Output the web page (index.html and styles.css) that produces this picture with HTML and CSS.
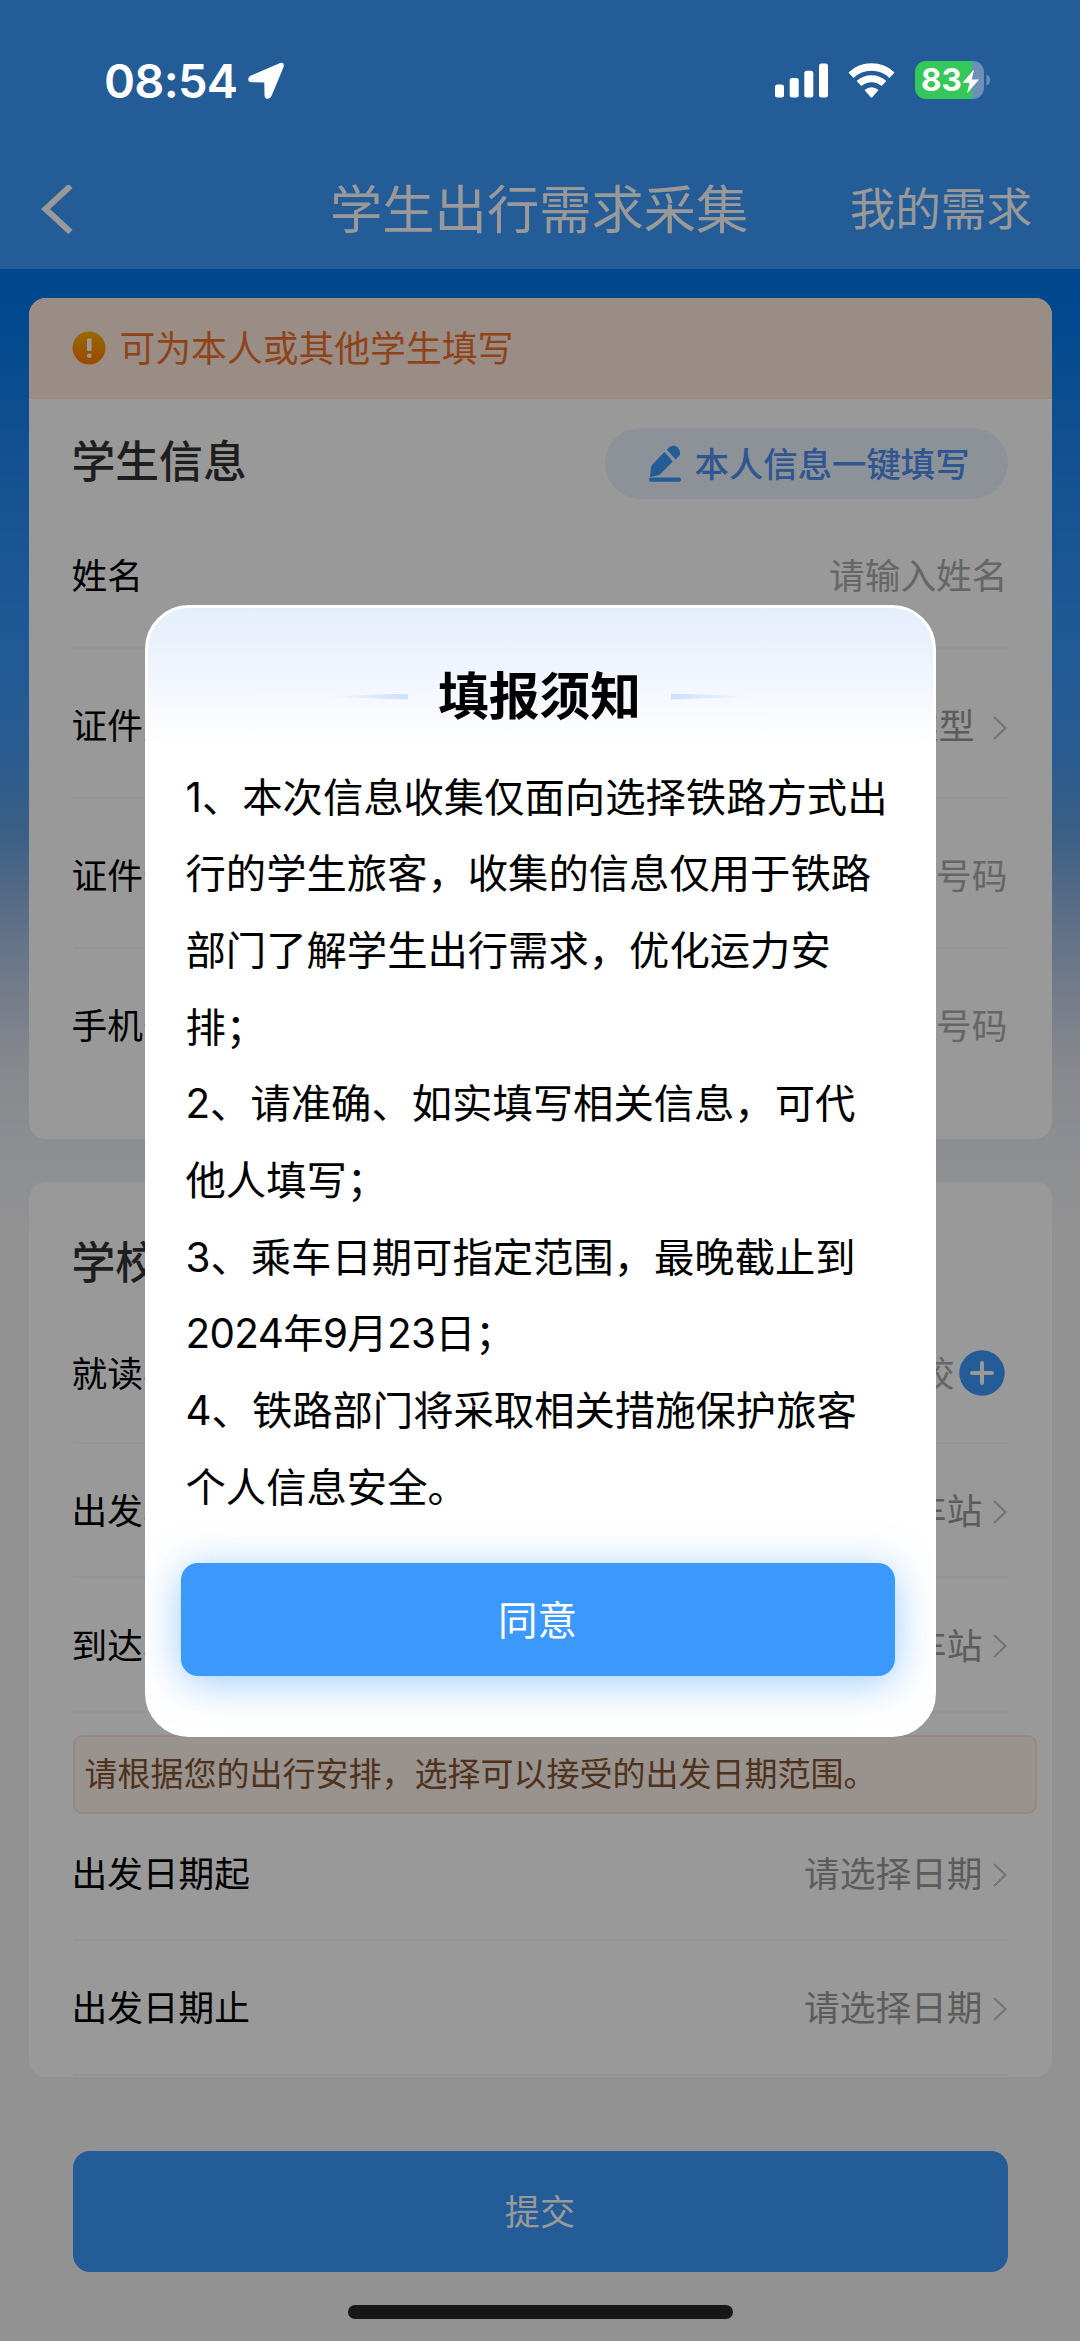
FILE: index.html
```html
<!DOCTYPE html>
<html lang="zh-CN">
<head>
<meta charset="utf-8">
<title>学生出行需求采集</title>
<link rel="stylesheet" href="styles.css">
</head>
<body>
<div class="page">
  <header class="header">
    <nav class="nav">
      <svg class="back" width="34" height="50" viewBox="0 0 34 50"><path d="M29.500 1 L4.500 24 L29.500 47" fill="none" stroke="#fff" stroke-width="6"/></svg>
      <h1 class="nav-title">学生出行需求采集</h1>
      <span class="nav-link">我的需求</span>
    </nav>
  </header>

  <main class="content">
    <section class="card card-student">
      <div class="banner">
        <svg width="34" height="34" viewBox="0 0 34 34">
          <defs><linearGradient id="warn" x1="0" y1="0" x2="0" y2="1"><stop offset="0" stop-color="#ffae00"/><stop offset="1" stop-color="#ff7a00"/></linearGradient></defs>
          <circle cx="17" cy="17" r="16.500" fill="url(#warn)"/>
          <rect x="15" y="7.500" width="4.600" height="12.500" rx="1" fill="#fff"/><rect x="15" y="22.500" width="4.600" height="4.600" rx="2" fill="#fff"/>
        </svg>
        <span>可为本人或其他学生填写</span>
      </div>
      <div class="section-head">
        <h2>学生信息</h2>
        <span class="fill-btn">
          <svg width="32" height="37" viewBox="0 0 32 37" fill="#3b99fc">
            <path d="M1 32 L2 22.500 Q2.300 20.800 3.500 19.500 L15.500 7 L23.800 16.500 L12 28.500 Q10.500 30 8.500 30.500 Z"/>
            <path d="M17.800 4.800 L20.500 2 Q24.500 -1.200 28.500 2.200 Q32.500 6.500 30.500 10.500 L26.700 14.600 Z"/>
            <rect x="0" y="32.600" width="32" height="4.200" rx="2"/>
          </svg>
          <span class="fill-label">本人信息一键填写</span>
        </span>
      </div>
      <div class="row"><span>姓名</span><span class="value input">请输入姓名</span></div>
      <div class="row"><span>证件类型</span><span class="value">请选择证件类型</span><svg class="arrow" viewBox="0 0 14 24"><path d="M1 1 L12.500 12 L1 23"/></svg></div>
      <div class="row"><span>证件号码</span><span class="value input">请输入证件号码</span></div>
      <div class="row"><span>手机号码</span><span class="value input">请输入手机号码</span></div>
    </section>

    <section class="card card-school">
      <div class="section-head"><h2>学校信息</h2></div>
      <div class="row row-school"><span>就读学校</span><span class="value input">请选择学校</span>
        <svg class="add" viewBox="0 0 46 46"><circle cx="23" cy="23" r="22.700" fill="#3b99fc"/><path d="M23 13v20M13 23h20" stroke="#fff" stroke-width="4" stroke-linecap="round"/></svg>
      </div>
      <div class="row"><span>出发车站</span><span class="value">请选择车站</span><svg class="arrow" viewBox="0 0 14 24"><path d="M1 1 L12.500 12 L1 23"/></svg></div>
      <div class="row"><span>到达车站</span><span class="value">请选择车站</span><svg class="arrow" viewBox="0 0 14 24"><path d="M1 1 L12.500 12 L1 23"/></svg></div>
      <p class="notice">请根据您的出行安排，选择可以接受的出发日期范围。</p>
      <div class="row row-date"><span>出发日期起</span><span class="value">请选择日期</span><svg class="arrow" viewBox="0 0 14 24"><path d="M1 1 L12.500 12 L1 23"/></svg></div>
      <div class="row row-last"><span>出发日期止</span><span class="value">请选择日期</span><svg class="arrow" viewBox="0 0 14 24"><path d="M1 1 L12.500 12 L1 23"/></svg></div>
    </section>

    <button class="submit">提交</button>
  </main>
</div>

<div class="overlay">
  <div class="dialog">
    <div class="dialog-title">
      <i class="dash dash-left"></i><h3>填报须知</h3><i class="dash dash-right"></i>
    </div>
    <div class="dialog-text">
      <p>1、本次信息收集仅面向选择铁路方式出<br>行的学生旅客，收集的信息仅用于铁路<br>部门了解学生出行需求，优化运力安<br>排；</p>
      <p>2、请准确、如实填写相关信息，可代<br>他人填写；</p>
      <p>3、乘车日期可指定范围，最晚截止到<br><span class="date">2024年9月23日；</span></p>
      <p>4、铁路部门将采取相关措施保护旅客<br>个人信息安全。</p>
    </div>
    <button class="agree">同意</button>
  </div>
</div>

<div class="statusbar">
  <span class="time">08:54</span>
  <svg class="location" width="38" height="38" viewBox="0 0 38 38"><path d="M32 1.400 Q37.800 -.8 36.600 5 L24.500 34 Q23 37 20.300 36.700 Q17.700 36.500 17.500 33.500 L17.300 20.500 L4.500 20.300 Q1.200 20 1.200 17.200 Q1.300 15 4 13.600 Z" fill="#fff"/></svg>
  <svg class="signal" width="54" height="36" viewBox="0 0 54 36" fill="#fff">
    <rect x="0" y="21.500" width="9" height="13" rx="2.500"/><rect x="14.700" y="15" width="9" height="19.500" rx="2.500"/><rect x="29.300" y="7.800" width="9" height="26.700" rx="2.500"/><rect x="44" y=".5" width="9" height="34" rx="2.500"/>
  </svg>
  <svg class="wifi" width="47" height="36" viewBox="0 0 47 36" fill="none" stroke="#fff">
    <path d="M3 12.200 A30 30 0 0 1 44 12.200" stroke-width="7.500"/>
    <path d="M11 20.500 A18.500 18.500 0 0 1 36 20.500" stroke-width="7"/>
    <path d="M16.500 27 Q23.500 21.500 30.500 27 L24.500 34 Q23.500 35 22.500 34 Z" fill="#fff" stroke="none"/>
  </svg>
  <div class="battery"><span>83</span>
    <svg class="bolt" width="18" height="25" viewBox="0 0 18 25"><path d="M12 .5 L.5 13.800 H7.500 L5 24.500 L17 10.500 H9.800 Z" fill="#fff"/></svg>
    <svg class="cap" width="5" height="12" viewBox="0 0 5 12"><path d="M.5 .5 Q4 2 4 6 Q4 10 .5 11.500 Z" fill="#6d8fb8"/></svg>
  </div>
</div>
<div class="home-indicator"></div>
</body>
</html>
```
FILE: styles.css
```css
* { box-sizing: border-box; margin: 0; padding: 0; }
body {
  width: 1080px;
  height: 2341px;
  overflow: hidden;
  font-family: Inter, "Noto Sans CJK SC", sans-serif;
  color: #000;
}
svg { display: block; flex: none; }
button { border: 0; font-family: inherit; color: #fff; background: #3b99fc; }

.page {
  height: 2341px;
  background: linear-gradient(180deg, #0077eb 269px, #0078ed 300px, #2187f2 459px, #3796fa 647px, #4698f0 757px, #669fdd 837px, #8fb3e0 897px, #c0cee6 990px, #e2e4ec 1070px, #e9eef4 1150px, #f3f3f3 1230px) #f3f3f3;
}

.header { height: 269px; padding-top: 149px; background: #3b99fc; color: #fff; }
.nav { height: 120px; padding: 0 48px 0 41px; display: grid; grid-template-columns: 289px 1fr 199px; align-items: center; }
.nav-title { font-size: 52.300px; font-weight: 400; line-height: 120px; white-space: nowrap; }
.nav-link { font-size: 45.600px; line-height: 120px; text-align: right; padding-top: 1px; }

.content { padding: 28.500px 28.500px 0; display: flex; flex-direction: column; }
.card { width: 1023px; background: #fff; border-radius: 17px; padding: 0 44px; }
.card-student { height: 841px; overflow: hidden; }
.card-school { height: 894.500px; margin-top: 43.500px; }

.banner {
  height: 101px; margin: 0 -44px; padding-left: 43px;
  display: flex; align-items: center; gap: 14px;
  background: #ffebe0; border-bottom: 1px solid #ffe4cf;
  color: #f0712a; font-size: 35.800px; white-space: nowrap;
}
.banner span { margin-top: -4px; }
.section-head { display: flex; justify-content: space-between; align-items: center; }
.section-head h2 { font-size: 43.800px; font-weight: 500; color: #333; line-height: 60px; margin-left: -1px; }
.card-student .section-head { height: 100px; padding-top: 9px; }
.card-student .section-head h2 { margin-top: 20px; }
.card-school .section-head { height: 127px; padding-top: 26px; }
.card-school .section-head h2 { margin-top: 11px; }
.fill-btn {
  width: 403px; height: 71px; border-radius: 36px; margin-top: 21px;
  display: flex; align-items: center; gap: 14px; padding-left: 44px;
  background: #ebf3fd; color: #4f8ff0; font-size: 34.400px; font-weight: 500; white-space: nowrap;
}
.fill-label { margin-top: -4px; }

.row { height: 150px; display: flex; align-items: center; border-bottom: 2px solid #f5f5f5; font-size: 35.700px; padding-top: 2px; white-space: nowrap; }
.row > span:first-child { margin-left: -1px; }
.card-student .row:last-child { border: 0; padding-top: 0; }
.value { margin-left: auto; color: #999; }
.input { color: #aaa; }
.arrow { width: 14px; height: 24px; margin: 9px 1px 0 18px; fill: none; stroke: #c0c0c0; stroke-width: 2; }
.card-school .arrow { margin: 6px 1px 0 10px; }
.add { width: 46px; height: 46px; margin: 2px 3px 0 4px; }

.card-school .row { height: 134.500px; padding-top: 0; padding-bottom: 2px; }
.card-school .row-school { padding-bottom: 7px; }
.card-school .row-date { height: 127px; padding-bottom: 9px; }
.card-school .row-last { height: 135.500px; padding-bottom: 3px; }
.notice {
  width: 964px; height: 79px; margin: 22px 0 0 0; padding-left: 10px;
  border: 2px solid #fde5d5; border-radius: 9px; background: #fff5ee;
  color: #86532f; font-size: 33px; line-height: 75px; white-space: nowrap;
}

.submit { align-self: center; width: 935px; height: 121px; margin-top: 74px; padding-bottom: 4px; border-radius: 17px; font-size: 35.200px; }

.overlay {
  position: absolute; inset: 0; background: rgba(0,0,0,.4);
  display: flex; justify-content: center; align-items: flex-start; padding-top: 604.500px;
}
.dialog {
  width: 791px; height: 1132px; border-radius: 44px; border: 3px solid #fff;
  background: linear-gradient(180deg, #e5eefb 0, #f1f5fe 70px, #fff 135px);
  padding: 56px 33px 0; overflow: hidden;
}
.dialog-title { height: 66px; display: flex; justify-content: center; align-items: center; gap: 30px; margin-left: -1px; }
.dialog-title h3 { font-size: 50.800px; font-weight: 600; line-height: 66px; }
.dash { width: 79px; height: 6px; }
.dash-left { background: linear-gradient(90deg, #fff0, #cbdfff); clip-path: polygon(0 45%, 100% 0, 100% 100%, 0 60%); }
.dash-right { background: linear-gradient(270deg, #fff0, #cbdfff); clip-path: polygon(100% 45%, 0 0, 0 100%, 100% 60%); }
.dialog-text { margin: 30px 0 0 5px; font-size: 40.350px; line-height: 76.700px; white-space: nowrap; }
.date { letter-spacing: -.6px; }
.agree {
  display: block; width: 714px; height: 113px; margin: 36px 0 0 0; padding-bottom: 3px; border-radius: 17px;
  font-size: 39.500px; box-shadow: 0 6px 40px rgba(59,153,252,.5);
}

.statusbar { position: absolute; top: 60px; left: 0; width: 1080px; height: 42px; display: flex; align-items: center; color: #fff; }
.time { margin: -2px 0 0 104px; width: 143px; font-size: 47px; font-weight: 600; letter-spacing: -.7px; }
.signal { margin-left: 490px; }
.wifi { margin-left: 19px; }
.battery {
  position: relative; width: 69px; height: 38px; margin: -2px 0 0 20px; padding-left: 6px; border-radius: 11px;
  background: linear-gradient(90deg, #34c759 57px, #6d8fb8 57px);
  font-size: 31.500px; font-weight: 700; line-height: 38px;
}
.bolt { position: absolute; left: 47px; top: 8px; }
.cap { position: absolute; left: 71px; top: 13px; }
.home-indicator { position: absolute; left: 348px; top: 2305px; width: 385px; height: 14px; border-radius: 7px; background: #171717; }
```
